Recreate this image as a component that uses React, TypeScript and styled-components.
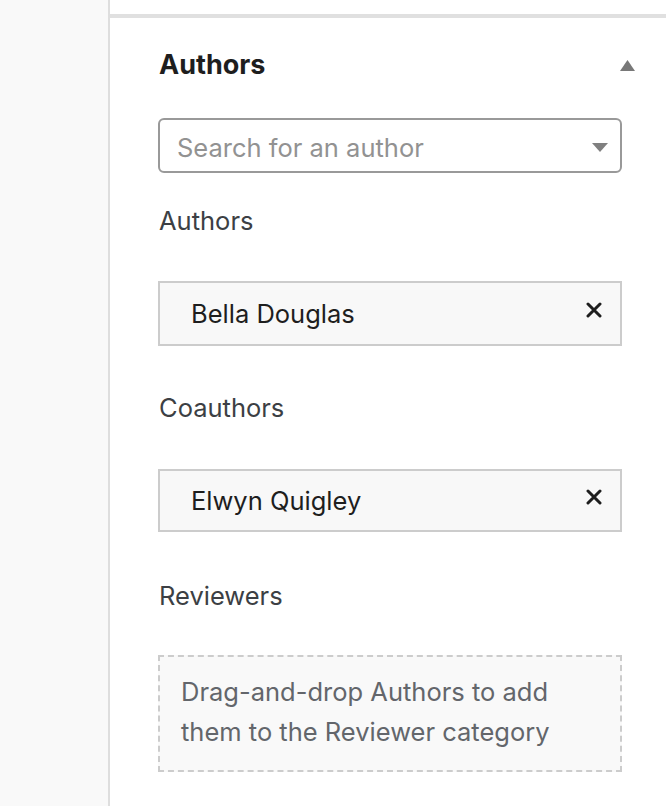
import React from 'react';
import styled, { createGlobalStyle } from 'styled-components';

const GlobalStyle = createGlobalStyle`
  html, body {
    margin: 0;
    padding: 0;
    background: #ffffff;
  }
  body {
    font-family: Inter, "Noto Sans", "Liberation Sans", sans-serif;
    -webkit-font-smoothing: antialiased;
  }
`;

const Page = styled.div`
  display: flex;
  width: 666px;
  height: 806px;
  overflow: hidden;
`;

const Gutter = styled.div`
  width: 108px;
  flex-shrink: 0;
  background: #f9f9f9;
  border-right: 2px solid #dedede;
`;

const Panel = styled.div`
  flex: 1;
  display: flex;
  flex-direction: column;
  padding-top: 14px;
`;

const Section = styled.section`
  border-top: 4px solid #e0e0e0;
  padding: 0 44px 0 48px;
`;

const Header = styled.div`
  display: flex;
  align-items: center;
  justify-content: space-between;
  height: 94px;
  margin-right: -13px;
`;

const Title = styled.h2`
  margin: 0 0 2px 1px;
  font-size: 27px;
  font-weight: 700;
  color: #1e1e1e;
`;

const Caret = styled.svg<{ $color?: string }>`
  display: block;
  fill: ${(p) => p.$color || '#787878'};
`;

const Search = styled.div`
  display: flex;
  align-items: center;
  justify-content: space-between;
  box-sizing: border-box;
  height: 55px;
  margin-top: 6px;
  padding: 4px 12px 0 17px;
  border: 2px solid #999999;
  border-radius: 6px;
  font-size: 25.5px;
  color: #929292;
`;

const Label = styled.div<{ $top: number }>`
  margin-top: ${(p) => p.$top}px;
  margin-left: 1px;
  font-size: 25.5px;
  color: #3c3f44;
  line-height: 30px;
`;

const Chip = styled.div<{ $top: number; $height: number }>`
  display: flex;
  align-items: center;
  justify-content: space-between;
  box-sizing: border-box;
  height: ${(p) => p.$height}px;
  margin-top: ${(p) => p.$top}px;
  padding: 0 18px 0 31px;
  background: #f8f8f8;
  border: 2px solid #cccccc;
  font-size: 25.5px;
  color: #1e1e1e;
`;

const Remove = styled.svg`
  display: block;
  margin-top: -8px;
  stroke: #1e1e1e;
  stroke-width: 3;
  stroke-linecap: round;
`;

const DropZone = styled.div`
  box-sizing: border-box;
  height: 117px;
  margin-top: 44px;
  padding: 15px 20px 0 21px;
  background: #f9f9f9;
  border: 2px dashed #cccccc;
  font-size: 25.5px;
  line-height: 40px;
  color: #63666b;
`;

function CloseIcon() {
  return (
    <Remove width="16" height="16" viewBox="0 0 16 16">
      <path d="M2 2 L14 14 M14 2 L2 14" />
    </Remove>
  );
}

function AuthorChip(props: { name: string; top: number; height: number }) {
  return (
    <Chip $top={props.top} $height={props.height}>
      <span>{props.name}</span>
      <CloseIcon />
    </Chip>
  );
}

export default function App() {
  return (
    <>
      <GlobalStyle />
      <Page>
        <Gutter />
        <Panel>
          <Section>
            <Header>
              <Title>Authors</Title>
              <Caret width="15" height="11" viewBox="0 0 15 11">
                <path d="M7.5 0 L15 11 L0 11 Z" />
              </Caret>
            </Header>
            <Search>
              <span>Search for an author</span>
              <Caret width="16" height="9" viewBox="0 0 16 9" $color="#808080">
                <path d="M0 0 L16 0 L8 9 Z" />
              </Caret>
            </Search>
            <Label $top={33}>Authors</Label>
            <AuthorChip name="Bella Douglas" top={45} height={65} />
            <Label $top={47}>Coauthors</Label>
            <AuthorChip name="Elwyn Quigley" top={46} height={63} />
            <Label $top={49}>Reviewers</Label>
            <DropZone>
              Drag-and-drop Authors to add them to the Reviewer category
            </DropZone>
          </Section>
        </Panel>
      </Page>
    </>
  );
}
